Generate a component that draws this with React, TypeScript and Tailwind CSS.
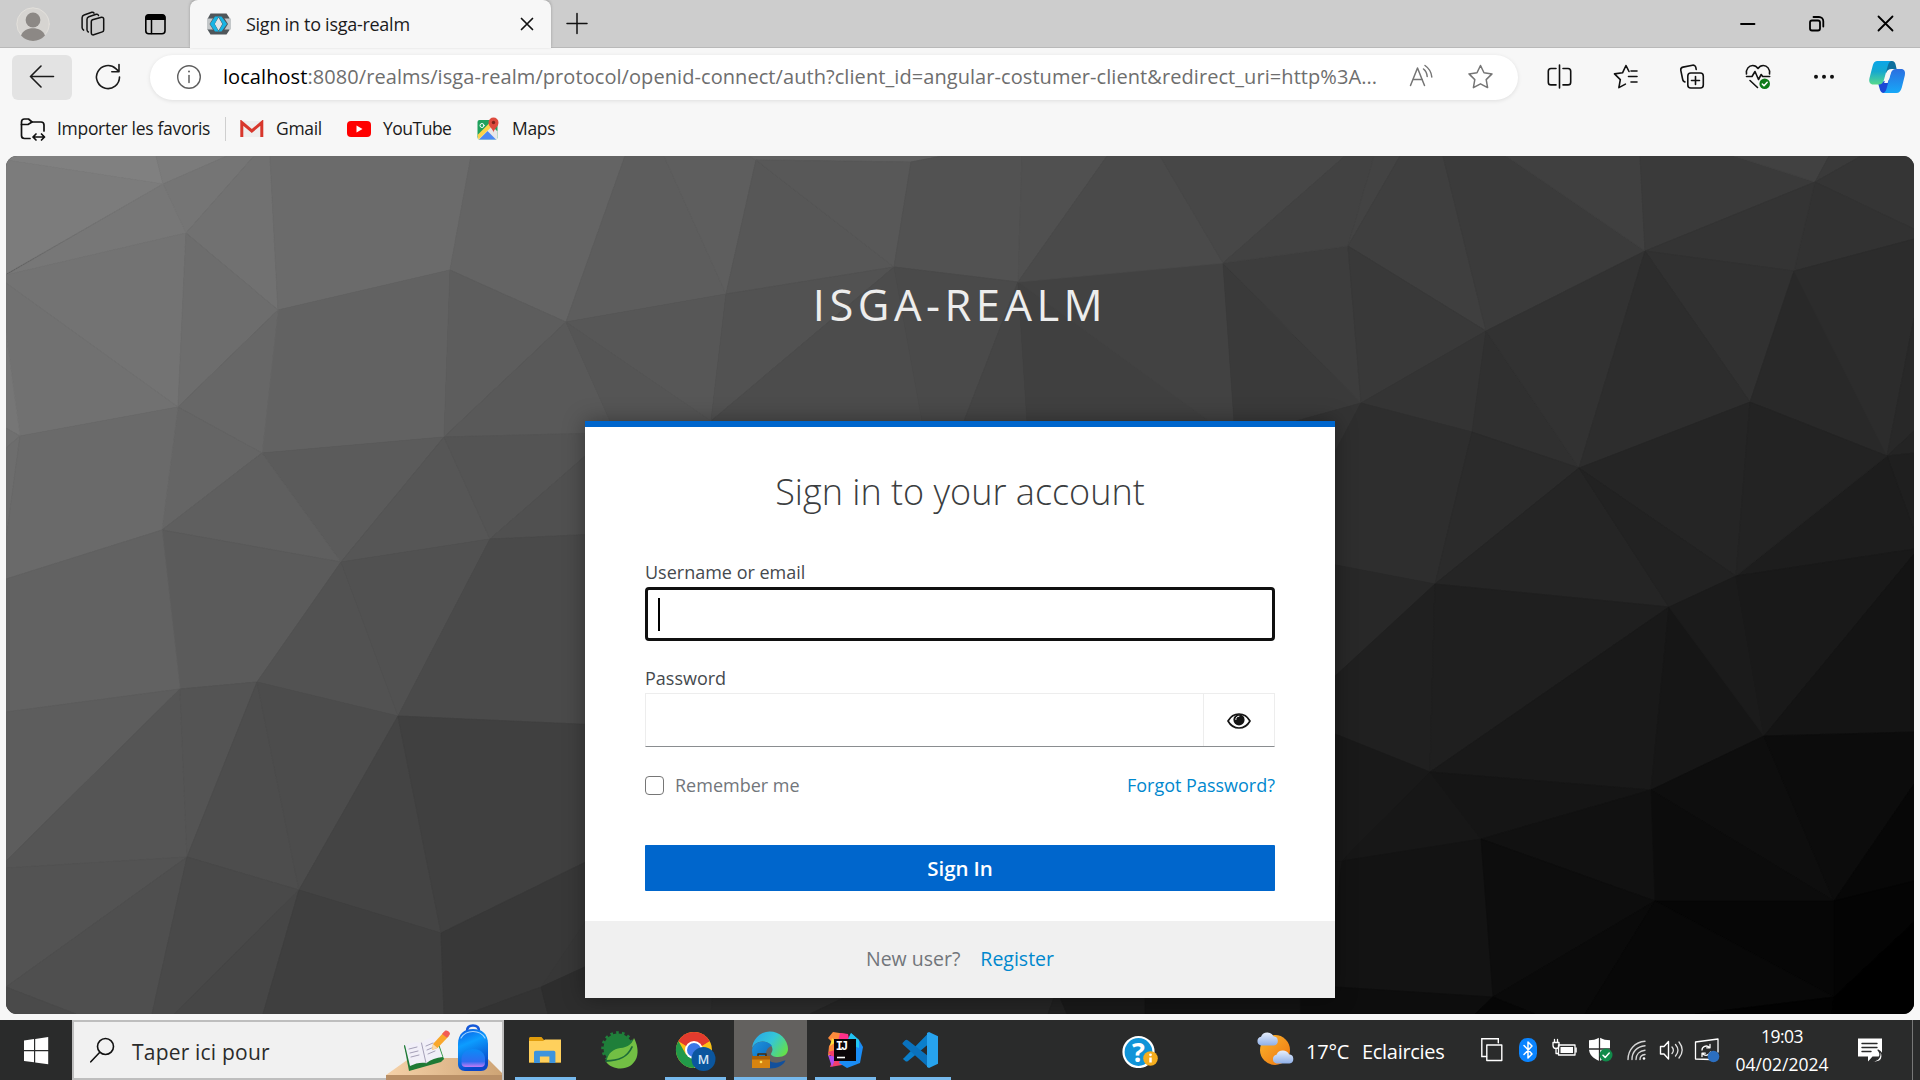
import type { ReactNode } from "react";

/* Draws an icon whose view box starts at (x, y) and is w by h pixels. */
function Icon({ x, y, w, h, className = "", children }: { x: number; y: number; w: number; h: number; className?: string; children: ReactNode }) {
  return (
    <svg width={w} height={h} viewBox={`${x} ${y} ${w} ${h}`} fill="none" strokeLinecap="round" strokeLinejoin="round" className={`block shrink-0 ${className}`}>
      {children}
    </svg>
  );
}

/* Low-poly facets: [points, fill]. */
const FACETS: [string, string][] = [
  ["6,156 156,156 163,184 6,160", "#808080"],
  ["156,156 227,156 163,184", "#7b7b7b"],
  ["163,184 227,156 254,156 186,233", "#757575"],
  ["186,233 254,156 270,156 278,310", "#717171"],
  ["6,160 163,184 6,274", "#7c7c7c"],
  ["163,184 186,233 6,275", "#777777"],
  ["6,275 186,233 178,407 6,283", "#737373"],
  ["6,283 178,407 20,436 6,333", "#717171"],
  ["186,233 278,310 178,407", "#6d6d6d"],
  ["6,333 20,436 6,428", "#767676"],
  ["6,428 20,436 6,448", "#707070"],
  ["20,436 6,448 6,540", "#6d6d6d"],
  ["270,156 471,156 450,270 278,310", "#6b6b6b"],
  ["471,156 625,156 566,322 450,270", "#646464"],
  ["278,310 450,270 444,437 262,453", "#626262"],
  ["278,310 262,453 178,407", "#676767"],
  ["450,270 566,322 444,437", "#5d5d5d"],
  ["178,407 262,453 162,530", "#656565"],
  ["20,436 178,407 162,530 6,579 6,540", "#6a6a6a"],
  ["262,453 444,437 341,562", "#5b5b5b"],
  ["262,453 162,530 341,562", "#5f5f5f"],
  ["566,322 444,437 610,433 610,421", "#595959"],
  ["444,437 341,562 490,539", "#565656"],
  ["444,437 490,539 600,443 600,433", "#545454"],
  ["490,539 600,443 600,534", "#505050"],
  ["162,530 341,562 257,682 180,689", "#5b5b5b"],
  ["162,530 180,689 6,712 6,579", "#626262"],
  ["341,562 398,716 257,682", "#525252"],
  ["341,562 490,539 398,716", "#515151"],
  ["490,539 600,534 600,725 398,716", "#4a4a4a"],
  ["6,712 180,689 6,861", "#5d5d5d"],
  ["180,689 187,857 6,868 6,861", "#555555"],
  ["180,689 257,682 187,857", "#545454"],
  ["257,682 187,857 299,890", "#4d4d4d"],
  ["257,682 398,716 299,890", "#4c4c4c"],
  ["398,716 299,890 441,933", "#444444"],
  ["398,716 441,933 600,855 600,725", "#404040"],
  ["6,868 187,857 6,987", "#535353"],
  ["187,857 6,987 76,1014 152,1014", "#4f4f4f"],
  ["6,987 6,1014 76,1014", "#4a4a4a"],
  ["187,857 152,1014 174,1014 299,890", "#494949"],
  ["299,890 174,1014 263,1014", "#464646"],
  ["299,890 263,1014 444,1014 441,933", "#3f3f3f"],
  ["441,933 444,1014 467,1014 541,987 600,900 600,855", "#383838"],
  ["541,987 600,900 600,960", "#373737"],
  ["541,987 467,1014 548,1014", "#333333"],
  ["541,987 548,1014 711,1014 713,998 600,960", "#2d2d2d"],
  ["625,156 664,156 726,294 566,322", "#5d5d5d"],
  ["664,156 749,156 756,160 726,294", "#5e5e5e"],
  ["749,156 942,156 911,162 756,160", "#606060"],
  ["756,160 726,294 894,267", "#575757"],
  ["756,160 911,162 894,267", "#585858"],
  ["566,322 726,294 711,421", "#575757"],
  ["566,322 711,421 610,421", "#555555"],
  ["726,294 894,267 711,421", "#525252"],
  ["911,162 942,156 1022,156 1018,282 894,267", "#525252"],
  ["894,267 922,421 711,421", "#4c4c4c"],
  ["894,267 1018,282 964,421 922,421", "#4a4a4a"],
  ["1018,282 964,421 1027,421", "#454545"],
  ["1018,282 1027,421 1209,421", "#404040"],
  ["1018,282 1223,263 1234,421 1209,421", "#424242"],
  ["1223,263 1234,421 1296,421 1361,403", "#3a3a3a"],
  ["1223,263 1348,246 1361,403", "#3d3d3d"],
  ["1022,156 1107,156 1018,282", "#505050"],
  ["1107,156 1160,156 1223,263 1018,282", "#4a4a4a"],
  ["1160,156 1345,156 1223,263", "#474747"],
  ["1345,156 1374,156 1348,246 1223,263", "#424242"],
  ["1374,156 1400,156 1348,246", "#434343"],
  ["1400,156 1443,156 1486,331 1348,246", "#3f3f3f"],
  ["1443,156 1506,156 1645,251 1486,331", "#3b3b3b"],
  ["1506,156 1640,156 1645,251", "#404040"],
  ["1640,156 1734,156 1815,182 1645,251", "#3a3a3a"],
  ["1734,156 1829,156 1815,182", "#414141"],
  ["1829,156 1861,156 1815,182", "#3a3a3a"],
  ["1861,156 1914,156 1914,229 1815,182", "#353535"],
  ["1815,182 1914,229 1914,239 1794,271", "#323232"],
  ["1645,251 1815,182 1794,271", "#343434"],
  ["1645,251 1794,271 1750,402", "#313131"],
  ["1794,271 1750,402 1887,456", "#292929"],
  ["1794,271 1914,239 1914,318 1887,456", "#2c2c2c"],
  ["1887,456 1914,318 1914,431", "#282828"],
  ["1887,456 1914,431 1914,453", "#242424"],
  ["1887,456 1914,453 1914,530", "#1f1f1f"],
  ["1887,456 1914,530 1914,549 1736,576", "#1d1d1d"],
  ["1348,246 1361,403 1486,331", "#393939"],
  ["1361,403 1486,331 1472,432", "#343434"],
  ["1486,331 1472,432 1579,468", "#303030"],
  ["1486,331 1645,251 1579,468", "#323232"],
  ["1645,251 1750,402 1579,468", "#2d2d2d"],
  ["1750,402 1579,468 1736,576", "#252525"],
  ["1750,402 1736,576 1887,456", "#232323"],
  ["1361,403 1296,421 1320,450 1336,450", "#333333"],
  ["1361,403 1472,432 1435,584 1320,562 1320,480", "#2e2e2e"],
  ["1472,432 1579,468 1435,584", "#2b2b2b"],
  ["1579,468 1435,584 1669,607", "#252525"],
  ["1579,468 1736,576 1669,607", "#222222"],
  ["1435,584 1320,562 1320,690", "#282828"],
  ["1435,584 1320,690 1320,728 1430,772", "#202020"],
  ["1435,584 1669,607 1430,772", "#1f1f1f"],
  ["1669,607 1430,772 1651,790", "#191919"],
  ["1669,607 1651,790 1764,736", "#161616"],
  ["1669,607 1736,576 1764,736", "#1b1b1b"],
  ["1736,576 1914,549 1914,554 1764,736", "#191919"],
  ["1764,736 1914,554 1914,732", "#141414"],
  ["1430,772 1320,728 1320,861 1342,861", "#191919"],
  ["1320,861 1342,861 1336,913 1336,987 1320,987", "#171717"],
  ["1430,772 1342,861 1481,839", "#171717"],
  ["1430,772 1481,839 1651,790", "#151515"],
  ["1481,839 1651,790 1655,901", "#111111"],
  ["1651,790 1764,736 1834,901", "#0e0e0e"],
  ["1651,790 1655,901 1834,901", "#0c0c0c"],
  ["1764,736 1914,732 1914,784 1834,901", "#0c0c0c"],
  ["1834,901 1914,784 1914,881", "#070707"],
  ["1834,901 1914,881 1914,922 1834,997", "#040404"],
  ["1655,901 1834,901 1834,997", "#060606"],
  ["1481,839 1342,861 1336,913 1336,987 1493,997", "#131313"],
  ["1481,839 1493,997 1655,901", "#0d0d0d"],
  ["1655,901 1493,997 1535,1014 1585,1014", "#0a0a0a"],
  ["1655,901 1585,1014 1695,1014 1834,997", "#080808"],
  ["1834,997 1695,1014 1832,1014", "#020202"],
  ["1834,997 1832,1014 1914,1014 1914,922", "#000000"],
  ["1336,987 1493,997 1475,1014 1300,1014 1300,985", "#0d0d0d"],
  ["1493,997 1475,1014 1535,1014", "#060606"],
  ["713,990 711,1014 810,1014 860,990", "#2b2b2b"],
  ["860,990 810,1014 1048,1014 1057,990", "#252525"],
  ["1057,990 1048,1014 1067,1014", "#202020"],
  ["1057,990 1067,1014 1145,1014 1145,990", "#191919"],
  ["1145,990 1145,1014 1300,1014 1300,990", "#131313"],
];

function PolyBackground() {
  return (
    <svg viewBox="6 156 1908 858" width="1908" height="858" className="absolute inset-0">
      <rect x="6" y="156" width="1908" height="858" fill="#2b2b2b" />
      {FACETS.map(([p, c], i) => (
        <polygon key={i} points={p} fill={c} stroke={c} strokeWidth="0.8" strokeLinejoin="round" />
      ))}
    </svg>
  );
}

function TabStrip() {
  return (
    <div className="flex h-12 shrink-0 bg-[#cdcdcd] shadow-[inset_0_-1px_0_#b9b9b9]">
      <div className="flex w-[190px] items-center pl-4">
        <Icon x={16} y={7} w={34} h={34}>
          <circle cx="33" cy="24" r="16.2" fill="#d6d4d1" stroke="#e6e3de" strokeWidth="0.8" />
          <circle cx="33" cy="20" r="7.4" fill="#8c8885" />
          <path d="M21 35.5c2-5 6.500-7.200 12-7.200s10 2.200 12 7.200a16 16 0 0 1-24 0z" fill="#8c8885" />
        </Icon>
        <Icon x={80} y={11} w={26} h={26} className="ml-[29px]">
          <g stroke="#111" strokeWidth="1.5">
            <path d="M93.500 19.800l9-2.600a1.800 1.800 0 0 1 2.200 1.800v11a2 2 0 0 1-1.400 1.900l-8.600 2.900a1.800 1.800 0 0 1-2.400-1.700V21.700a2 2 0 0 1 1.200-1.900z" />
            <path d="M99.500 15.500a1.800 1.800 0 0 0-2.300-1.200l-7.400 2.500a2.600 2.600 0 0 0-1.800 2.400v10.600c0 1 .5 1.700 1.300 2.200" />
            <path d="M95 13.200a1.800 1.800 0 0 0-2.200-.9l-7.700 2.700a3 3 0 0 0-2 2.800v9.700c0 1.200.6 2 1.500 2.600" />
          </g>
        </Icon>
        <Icon x={145} y={12} w={24} h={24} className="ml-[39px]">
          <rect x="146.800" y="14.800" width="19.200" height="19" rx="3" stroke="#000" strokeWidth="1.600" />
          <path d="M146.500 20v-2a3.500 3.500 0 0 1 3.500-3.500h13a3.500 3.500 0 0 1 3.500 3.500v2z" fill="#000" />
          <path d="M152.500 20v13.500" stroke="#000" strokeWidth="1.500" />
        </Icon>
      </div>
      <div className="flex w-[361px] items-center rounded-t-lg bg-[#f7f7f7] shadow-[0_-1px_3px_rgba(0,0,0,0.25)]">
        <Icon x={206} y={12} w={26} h={24} className="ml-4">
          <path d="M210.500 13.500h16l3 4.500v12l-3 4.500h-16l-3-5V19z" fill="#50565a" />
          <path d="M207 18.500h24v11h-24z" fill="#c3c7c9" />
          <path d="M214.500 16h8.500l5 8-5 8h-8.500l-5-8z" fill="#50565a" />
          <path d="M218.500 17.500l3.800 6.500-3.800 6.500-3.800-6.500z" fill="#dfe5e8" />
          <path d="M215 16.500l-5 7.500 5 7.500h3.700l-4.200-7.500 4.200-7.500zM221.500 16.500l5.500 7.500-5.500 7.500h-3l4.300-7.500-4.300-7.500z" fill="#18b4e4" />
        </Icon>
        <span className="ml-3.5 w-[273px] whitespace-nowrap text-[18px] tracking-[-0.27px] text-[#1b1b1b]">Sign in to isga-realm</span>
        <Icon x={519} y={17} w={16} h={16}>
          <path d="M521.500 19.500l11 11m0-11l-11 11" stroke="#111" strokeWidth="1.700" />
        </Icon>
      </div>
      <div className="flex flex-1 items-center">
        <Icon x={565} y={12} w={24} h={24} className="ml-3.5">
          <path d="M567 23.500h20M577 13.500v20" stroke="#111" strokeWidth="1.500" />
        </Icon>
        <Icon x={1739} y={13} w={18} h={20} className="ml-auto">
          <path d="M1741 23h13.500" stroke="#000" strokeWidth="1.800" />
        </Icon>
        <Icon x={1807} y={14} w={20} h={20} className="ml-[50px]">
          <rect x="1810" y="20.500" width="10" height="10" rx="2" stroke="#000" strokeWidth="1.800" />
          <path d="M1813.500 17h5.500a4.300 4.300 0 0 1 4.300 4.300v5.200" stroke="#000" strokeWidth="1.800" />
        </Icon>
        <Icon x={1876} y={14} w={20} h={20} className="mr-6 ml-[49px]">
          <path d="M1878.500 16.500l14 14m0-14l-14 14" stroke="#000" strokeWidth="1.800" />
        </Icon>
      </div>
    </div>
  );
}

function Toolbar() {
  return (
    <div className="flex h-[59px] shrink-0 items-center pb-[3px] pt-0.5">
      <div className="ml-3 flex h-[45px] w-[60px] items-center justify-center rounded-md bg-[#e3e3e3]">
        <Icon x={29} y={65} w={26} h={24}>
          <path d="M53.500 76.500H30.500M41 66L30.500 76.500 41 87" stroke="#1b1b1b" strokeWidth="1.600" />
        </Icon>
      </div>
      <Icon x={94} y={63} w={28} h={28} className="ml-[22px]">
        <path d="M119.500 77a11.500 11.500 0 1 1-3.700-8.400l3 2.800M119 64.500v7.200h-7.200" stroke="#1b1b1b" strokeWidth="1.600" />
      </Icon>
      <div className="ml-7 flex h-[45px] w-[1368px] items-center rounded-full bg-white shadow-[0_1px_4px_rgba(0,0,0,0.1)]">
        <Icon x={176} y={64} w={26} h={26} className="ml-[26px]">
          <circle cx="189" cy="77" r="11.300" stroke="#5f5f5f" strokeWidth="1.400" />
          <path d="M189 75.500v7" stroke="#5f5f5f" strokeWidth="1.500" />
          <circle cx="189" cy="71.500" r="1" fill="#5f5f5f" />
        </Icon>
        <span className="ml-[21px] w-[1185px] whitespace-nowrap text-[20px] tracking-[0.07px] text-[#6e6e6e]">
          <span className="text-black">localhost</span>:8080/realms/isga-realm/protocol/openid-connect/auth?client_id=angular-costumer-client&amp;redirect_uri=http%3A...
        </span>
        <Icon x={1408} y={63} w={28} h={28}>
          <g stroke="#757575" strokeWidth="1.500">
            <path d="M1410.500 85.500l7-17.500 7 17.500M1412.800 79.500h9.500" />
            <path d="M1423.500 69c2.200 1.800 3.500 4.300 3.700 7.500M1425 65.500c4 2.700 6.300 6.500 6.800 11.500" />
          </g>
        </Icon>
        <Icon x={1467} y={63} w={28} h={28} className="ml-[31px]">
          <path d="M1480.500 65.500l3.500 7.300 8 1.100-5.800 5.700 1.400 8-7.100-3.800-7.100 3.800 1.400-8-5.800-5.700 8-1.100z" stroke="#757575" strokeWidth="1.500" />
        </Icon>
      </div>
      <Icon x={1546} y={63} w={28} h={28} className="ml-7">
        <g stroke="#111" strokeWidth="1.600">
          <path d="M1559.500 65v23M1556 68.500h-5a2.700 2.700 0 0 0-2.700 2.700v11a2.700 2.700 0 0 0 2.700 2.700h5M1563 68.500h5a2.700 2.700 0 0 1 2.700 2.700v11a2.700 2.700 0 0 1-2.700 2.700h-5" />
        </g>
      </Icon>
      <Icon x={1612} y={63} w={28} h={28} className="ml-[38px]">
        <path d="M1637 76.500h-8.500M1637 71h-6M1637 82h-6M1629 71.500l-3-6-3.500 7.300-8 1.100 5.800 5.700-1.400 8 6.500-3.500" stroke="#111" strokeWidth="1.600" />
      </Icon>
      <Icon x={1678} y={63} w={28} h={28} className="ml-[38px]">
        <g stroke="#111" strokeWidth="1.600">
          <rect x="1687.800" y="73" width="15.500" height="15" rx="3" />
          <path d="M1695.500 76.500v8M1691.500 80.500h8" />
          <path d="M1685 82l-1-.5a3 3 0 0 1-1.300-2l-1.900-9.200a2.800 2.800 0 0 1 2.200-3.200l9.500-1.900a2.800 2.800 0 0 1 3.300 2.200l.4 2" />
        </g>
      </Icon>
      <Icon x={1744} y={63} w={30} h={30} className="ml-[38px]">
        <g stroke="#111" strokeWidth="1.600">
          <path d="M1746.500 75c-.8-5 2.500-8.500 6.200-8.500 2.300 0 4 1 5.300 3 1.300-2 3-3 5.300-3 3.700 0 7 3.500 6.200 8.500" />
          <path d="M1746.500 77.500h5.500l3-5 3.500 8 2.700-5 1.500 2h7" />
          <path d="M1750 81.500l7.500 7" />
        </g>
        <circle cx="1764.700" cy="84.800" r="5.300" fill="#0f7b18" />
        <path d="M1762.300 85l1.700 1.700 3.200-3.500" stroke="#fff" strokeWidth="1.500" />
      </Icon>
      <Icon x={1812} y={72} w={24} h={10} className="ml-[38px]">
        <g fill="#111">
          <circle cx="1816" cy="76.700" r="2" />
          <circle cx="1824" cy="76.700" r="2" />
          <circle cx="1832" cy="76.700" r="2" />
        </g>
      </Icon>
      <Icon x={1868} y={59} w={38} h={36} className="ml-8">
        <defs>
          <linearGradient id="cpA" x1="0" y1="0" x2="0" y2="1">
            <stop offset="0" stopColor="#0aa5e8" />
            <stop offset="0.450" stopColor="#16a9cf" />
            <stop offset="1" stopColor="#57d98c" />
          </linearGradient>
          <linearGradient id="cpB" x1="0" y1="0" x2="0" y2="1">
            <stop offset="0" stopColor="#2b6fe0" />
            <stop offset="1" stopColor="#17a8f8" />
          </linearGradient>
        </defs>
        <path d="M1884 61h8c2 0 3 1.500 3.600 3.500l1 4.500h-5c-3 0-4.500 1.500-5.500 4z" fill="#0d6f9e" />
        <path d="M1878 83c1.500 4 1.800 9.500 5 10h4l4-14z" fill="#1b49d6" />
        <path d="M1877 61h14.500c-2 .6-2.800 2-3.600 4.500l-4 14.500c-.8 3-2.500 4.500-5.400 4.500h-5c-3.500 0-5-2.500-4-6.500l3-11.500c.8-3.300 2-5.500 4.500-5.500z" fill="url(#cpA)" />
        <path d="M1883 93c2-.6 2.900-2 3.600-4.500l4-14.500c.9-3.200 2.600-5 5.400-5h5c3.300 0 4.700 2.600 3.800 6.500l-3 12c-.9 3.500-2.500 5.500-5.500 5.500z" fill="url(#cpB)" />
        <path d="M1888.500 70.500h2.800l-3.600 12.500h-3.600z" fill="#f7f7f7" />
      </Icon>
    </div>
  );
}

function Bookmarks() {
  return (
    <div className="flex h-[49px] shrink-0 items-center whitespace-nowrap pb-1.5 text-[17.5px] tracking-[-0.3px] text-[#1b1b1b]">
      <Icon x={19} y={115} w={28} h={26} className="ml-[19px]">
        <g stroke="#111" strokeWidth="1.700">
          <path d="M30 137.500h-5.500a3 3 0 0 1-3-3V121a3 3 0 0 1 3-3h4l3.500 3h9a3 3 0 0 1 3 3v6" />
          <path d="M21.500 123.500h6.500l4-2.500M33 136h11.500M36 133l-3 3 3 3M41.500 133l3 3-3 3" />
        </g>
      </Icon>
      <span className="ml-2.5 w-[168px]">Importer les favoris</span>
      <div className="h-6 w-px bg-[#cfcfcf]" />
      <Icon x={240} y={120} w={24} h={18} className="ml-3.5">
        <path d="M241 121h22v16h-22z" fill="#eee" />
        <path d="M241.800 137v-14.500l10 8.500 10-8.500V137" stroke="#d8372c" strokeWidth="3" strokeLinejoin="miter" strokeLinecap="butt" />
      </Icon>
      <span className="ml-3 w-[71px]">Gmail</span>
      <Icon x={347} y={120} w={24} h={18}>
        <rect x="347" y="121" width="24" height="16" rx="4" fill="#f00" />
        <path d="M356.500 125.500v7l6-3.500z" fill="#fff" />
      </Icon>
      <span className="ml-3 w-[94px] tracking-[-0.5px]">YouTube</span>
      <Icon x={478} y={116} w={23} h={24}>
        <rect x="478.500" y="119" width="20" height="19.500" rx="2" fill="#1fa15d" />
        <path d="M478.500 136.500l13-13 7 7v6a2 2 0 0 1-2 2h-16a2 2 0 0 1-2-2z" fill="#e8e8e8" />
        <path d="M480 138.500l8.500-8.500 8.500 8.500z" fill="#4a89f3" />
        <path d="M478.500 134l14-14 3 3-16 15.500z" fill="#fcd34a" />
        <path d="M494.500 131.500c-.5-4-5-5.500-5-10a5 5 0 0 1 10 0c0 4.500-4.500 6-5 10z" fill="#dd4b3e" />
        <circle cx="494.500" cy="121.500" r="1.700" fill="#7e231b" />
        <circle cx="483" cy="124.500" r="2" stroke="#fff" strokeWidth="1" />
      </Icon>
      <span className="ml-3">Maps</span>
    </div>
  );
}

function LoginCard() {
  return (
    <div className="mx-auto flex h-[577px] w-[750px] flex-col border-t-[6px] border-[#0066cc] bg-white shadow-[0_0_20px_rgba(3,3,3,0.35)]">
      <div className="flex h-[494px] flex-col px-[60px] text-[18px] leading-[27px] text-[#45494d]">
        <h1 className="mt-[41px] h-[50px] text-center text-[36px] font-light leading-[48px] text-[#3a3d40]">Sign in to your account</h1>
        <label className="mb-px mt-[41px]">Username or email</label>
        <div className="flex h-[54px] items-center rounded border-[3px] border-[#101010] bg-white px-2.5">
          <div className="h-[33px] w-[2px] bg-black" />
        </div>
        <label className="mt-[24px] h-[28px]">Password</label>
        <div className="flex h-[54px] border border-[#ededed] border-b-[#8a8d90]">
          <div className="w-[558px] border-r border-[#ededed]" />
          <div className="flex flex-1 items-center justify-center pt-0.5">
            <Icon x={1227} y={711} w={24} h={20}>
              <path d="M1228 721c2.500-4.500 6.500-7 11-7s8.500 2.500 11 7c-2.500 4.500-6.500 7-11 7s-8.500-2.500-11-7z" stroke="#151515" strokeWidth="1.700" />
              <circle cx="1239" cy="719.800" r="5.600" fill="#151515" />
              <path d="M1235.800 719.500c0-2 1.300-3.300 3.200-3.300" stroke="#fff" strokeWidth="1" />
            </Icon>
          </div>
        </div>
        <div className="mt-[25px] flex h-[27px] items-center">
          <div className="mb-px size-[19px] rounded border-[1.5px] border-[#767676] bg-white" />
          <span className="ml-[11px] text-[#72767b]">Remember me</span>
          <span className="ml-auto text-[#0088ce]">Forgot Password?</span>
        </div>
        <div className="mt-[46px] flex h-[46px] items-center justify-center rounded-[1px] bg-[#0066cc] text-[20.5px] font-semibold tracking-[-0.1px] text-white">Sign In</div>
      </div>
      <div className="flex flex-1 items-center justify-center gap-5 bg-[#f0f0f0] pb-0.5 text-[19.5px]">
        <span className="text-[#72767b]">New user?</span>
        <span className="text-[#0088ce]">Register</span>
      </div>
    </div>
  );
}

function TaskApp({ children, className }: { children: ReactNode; className: string }) {
  return <div className={`flex h-[60px] shrink-0 flex-col items-center justify-between ${className}`}>{children}</div>;
}

function Taskbar() {
  return (
    <div className="flex h-[60px] shrink-0 items-center bg-[#2a2b2b] text-white">
      <Icon x={0} y={1020} w={72} h={60}>
        <path d="M24 1040.500l10-1.400v11h-10zM35.200 1039l13-1.900v13h-13zM24 1051.300h10v11l-10-1.400zM35.200 1051.300h13v13l-13-1.900z" fill="#fff" />
      </Icon>
      <div className="flex h-[60px] w-[432px] items-center border-2 border-[#bebebe] bg-[#f1f1f1]">
        <Icon x={88} y={1036} w={28} h={28} className="ml-3.5">
          <circle cx="105.500" cy="1046.500" r="8" stroke="#111" strokeWidth="1.600" />
          <path d="M99.800 1052.300l-9 9.500" stroke="#111" strokeWidth="1.600" />
        </Icon>
        <span className="ml-4 mt-1.5 w-[254px] whitespace-nowrap text-[21px] tracking-[0.2px] text-[#2b2b2b]">Taper ici pour</span>
        <Icon x={386} y={1022} w={116} h={58} className="-mb-0.5">
          <defs>
            <linearGradient id="desk" x1="0" y1="0" x2="1" y2="0">
              <stop offset="0" stopColor="#f6d2a9" />
              <stop offset="1" stopColor="#cda374" />
            </linearGradient>
            <linearGradient id="bag" x1="0" y1="0" x2="0.300" y2="1">
              <stop offset="0" stopColor="#0a55e0" />
              <stop offset="0.400" stopColor="#0c9dff" />
              <stop offset="1" stopColor="#0a47c9" />
            </linearGradient>
            <linearGradient id="pocket" x1="0" y1="0" x2="0" y2="1">
              <stop offset="0" stopColor="#0a8cf7" />
              <stop offset="0.700" stopColor="#2f6cf0" />
              <stop offset="1" stopColor="#c77bf5" />
            </linearGradient>
          </defs>
          <path d="M386 1075l24-17h77l17 17z" fill="url(#desk)" />
          <path d="M386 1075h118v6H386z" fill="#b98f66" />
          <path d="M404 1046l35-2 5 15-33 11z" fill="#2f9443" />
          <path d="M404 1045l5 26 32-9 3-3-5-5z" fill="#1f7a35" />
          <path d="M405 1045c6-3 12-3.500 16.500-2 3.500-3.500 8-5.500 14-6l7 20c-6 .5-12 3-16 6-5-1-11 0-16.500 3z" fill="#f1eff8" />
          <path d="M421.500 1043l4.500 20M409 1049l8-2M410 1053l8-2M411 1057l8-2M426 1046l7-3M427 1050l7-3M428 1054l7-3" stroke="#a5a0b8" strokeWidth="1" />
          <path d="M432 1050l1-6 11-12 5 4-11.500 12z" fill="#f9a72b" />
          <path d="M432 1050l1-6 4.500 4z" fill="#f8d9ab" />
          <path d="M442 1034l3-3.200c1-1 4-.2 4.800 2.200.4 1.300-.3 2-1 2.800l-1.800 2z" fill="#f25c54" />
          <path d="M467 1031c0-4 2.500-5.500 6-5.500s6 1.500 6 5.500" stroke="#1458d8" strokeWidth="2.500" />
          <path d="M458 1044c0-10 6-15 15-15s15 5 15 15v20c0 4-2.500 7-7 7h-16c-4.500 0-7-3-7-7z" fill="url(#bag)" />
          <path d="M461 1038c3-5 7-6.500 12-6.500s9 1.500 12 6.500" stroke="#9fd2ff" strokeWidth="1.200" />
          <path d="M461.500 1059c0-6 4.500-10 11.500-10s12 4 12 10v4c0 2.500-1.500 4-4 4h-15.500c-2.500 0-4-1.500-4-4z" fill="url(#pocket)" />
        </Icon>
      </div>

      <TaskApp className="ml-[11px] w-[61px]">
        <Icon x={528} y={1034} w={34} h={32} className="mr-px mt-3.5">
          <path d="M529 1038.500c0-.8.700-1.500 1.500-1.500h11l2.500 3H561v22.500h-32z" fill="#e09c0c" />
          <path d="M529 1041h14l2-1.500h16v23h-32z" fill="#ffd05c" />
          <path d="M534 1063v-10.500c0-1 .8-1.700 1.700-1.700h18c1 0 1.700.7 1.700 1.700V1063h-6v-6.500h-9.500v6.500z" fill="#3d94dd" />
        </Icon>
        <div className="h-[3px] w-full bg-[#76b9ed]" />
      </TaskApp>
      <TaskApp className="ml-6 w-[40px]">
        <Icon x={600} y={1030} w={40} h={40} className="mt-2.5">
          <circle cx="618" cy="1048" r="14.500" fill="#1f7f3a" />
          <circle cx="618" cy="1048" r="15" stroke="#1f7f3a" strokeWidth="3.500" strokeDasharray="2.600 3.100" strokeLinecap="butt" />
          <path d="M634 1038c3 6 5 13 2.500 20-3 7-9 10.500-16 10.500-6 0-11-2.500-14-6 1-10 7-13.500 14-14.500 7-.8 11-3 13.500-10z" fill="#72bf44" />
          <path d="M606 1061c12 0 21-3 26-14" stroke="#1d6b38" strokeWidth="1.800" />
        </Icon>
      </TaskApp>
      <TaskApp className="ml-[25px] w-[61px]">
        <Icon x={676} y={1030} w={42} h={44} className="mt-2.5">
          <circle cx="695" cy="1050" r="18" fill="#fbc116" />
          <path d="M695 1050l-15.600-9a18 18 0 0 1 31.200 0z" fill="#e33b2e" />
          <path d="M679.400 1041a18 18 0 0 0 15.600 27l8-13.500-16 0z" fill="#229a49" />
          <path d="M679.400 1041h31.200L695 1051z" fill="#e33b2e" />
          <circle cx="695" cy="1050" r="9" fill="#fff" />
          <circle cx="695" cy="1050" r="7" fill="#3b78e7" />
          <circle cx="704.500" cy="1059" r="12" fill="#0b569e" />
          <text x="704.500" y="1063.700" fill="#d7e6f5" fontSize="12.500" fontWeight="600" fontFamily="Open Sans, sans-serif" textAnchor="middle">M</text>
        </Icon>
        <div className="h-[3px] w-full bg-[#76b9ed]" />
      </TaskApp>
      <TaskApp className="ml-2 w-[73px] bg-[#63615f]">
        <Icon x={750} y={1030} w={40} h={40} className="mr-0.5 mt-2.5">
          <defs>
            <linearGradient id="edA" x1="0" y1="0.200" x2="1" y2="0.700">
              <stop offset="0" stopColor="#28a8e8" />
              <stop offset="0.500" stopColor="#34c6d8" />
              <stop offset="1" stopColor="#64e04a" />
            </linearGradient>
            <linearGradient id="edB" x1="0" y1="0" x2="1" y2="1">
              <stop offset="0" stopColor="#1c95e0" />
              <stop offset="1" stopColor="#0d5cb0" />
            </linearGradient>
          </defs>
          <path d="M752 1050a18 18 0 0 1 36-1c0 5-4 8-10 8-4.500 0-7-1.500-7-3 0-1 1.500-2 1.500-4.500 0-4-4-8-10-8-5 0-9 3-10.500 7z" fill="url(#edA)" />
          <path d="M752 1050c1-5 5.500-8.500 10.500-8.500 4 0 7.500 1.500 9.500 4.500-3 .5-6 3-6 8 0 7 5 11 9 12.500-1.500 1-3 1.500-5 1.500a18 18 0 0 1-18-18z" fill="url(#edB)" />
          <path d="M766 1054c0 7 7 9.500 12 8.500 4-.8 6-2.500 7.500-2-2 4.500-8 8-15.500 8-4-3-6-9-4-14.500z" fill="#12509c" />
          <path d="M758 1056v-2h8v2" stroke="#4a2c08" strokeWidth="1.500" />
          <rect x="752" y="1056" width="18" height="12" fill="#d88410" />
          <path d="M752 1056h18v3.500h-18z" fill="#a75f08" />
          <circle cx="761" cy="1062" r="1.300" fill="#ffe15a" />
        </Icon>
        <div className="h-[3px] w-full bg-[#76b9ed]" />
      </TaskApp>
      <TaskApp className="ml-2 w-[61px]">
        <Icon x={826} y={1030} w={40} h={40} className="mt-2.5">
          <path d="M833 1032l13 2-4 16-14 6 1-10 3-4-4-4z" fill="#fc8a3c" />
          <path d="M840 1033l8 1 2 10-14 6z" fill="#fe2f8a" />
          <path d="M828 1052l14-4 6 16-18 3 3-9z" fill="#f43f6b" />
          <path d="M828 1055l8 2-4 10z" fill="#b04df0" />
          <path d="M851 1033l8 7 4 7-3 16-13 5-8-5 8-20z" fill="#1a8cf5" />
          <path d="M851 1033l8 7v8l-13-5z" fill="#22c3f0" />
          <path d="M832 1038l4 4-6 4z" fill="#fddc3a" />
          <rect x="834" y="1039" width="22" height="22" fill="#0a0508" />
          <text x="835.800" y="1050.300" fill="#fff" fontSize="12" fontWeight="700" fontFamily="Liberation Mono, monospace" textLength="12.500">IJ</text>
          <path d="M837 1057.500h8" stroke="#fff" strokeWidth="1.600" strokeLinecap="butt" />
        </Icon>
        <div className="h-[3px] w-full bg-[#76b9ed]" />
      </TaskApp>
      <TaskApp className="ml-[14px] w-[61px]">
        <Icon x={900} y={1030} w={40} h={40} className="mr-0.5 mt-2.5">
          <path d="M903.500 1058.500l24.500-25v11l-20 16.500c-1 .8-2 .7-2.700 0l-1.800-1.500c-.7-.6-.7-1 0-1z" fill="#0a7fcb" />
          <path d="M903 1042.500l2.200-2.200c.8-.8 1.700-.7 2.600 0L928 1056v11l-25-22.500c-.7-.7-.7-1.300 0-2z" fill="#0a72bd" />
          <path d="M927 1033l2-1 9 4.300v27.500l-9 4.300-2-1.200z" fill="#27a3ee" />
        </Icon>
        <div className="h-[3px] w-full bg-[#76b9ed]" />
      </TaskApp>

      <Icon x={1119} y={1034} w={38} h={34} className="ml-[169px] mt-0.5">
        <circle cx="1137.500" cy="1052" r="15" fill="#1094d8" stroke="#fff" strokeWidth="2.200" />
        <text x="1137.500" y="1061.500" fill="#fff" fontSize="27" fontWeight="700" fontFamily="Open Sans, sans-serif" textAnchor="middle">?</text>
        <circle cx="1149.500" cy="1058.500" r="7.300" fill="#f5ad1e" />
        <path d="M1149.500 1057.500v5" stroke="#fff" strokeWidth="2.500" strokeLinecap="butt" />
        <circle cx="1149.500" cy="1054.800" r="1.400" fill="#fff" />
      </Icon>
      <Icon x={1257} y={1031} w={40} h={38} className="ml-[98px]">
        <defs>
          <linearGradient id="sun" x1="0" y1="0" x2="1" y2="1">
            <stop offset="0" stopColor="#fbb62c" />
            <stop offset="1" stopColor="#ee7410" />
          </linearGradient>
          <linearGradient id="cloud" x1="0" y1="0" x2="0" y2="1">
            <stop offset="0" stopColor="#e6eefc" />
            <stop offset="1" stopColor="#8fb0e8" />
          </linearGradient>
        </defs>
        <circle cx="1276" cy="1050" r="15" fill="url(#sun)" />
        <path d="M1262 1045.500a4.500 4.500 0 0 1 0-8.800 7 7 0 0 1 12.500-.5 4.700 4.700 0 0 1 .5 9.300z" fill="url(#cloud)" />
        <path d="M1277.500 1063.500a4.500 4.500 0 0 1 0-8.800 7 7 0 0 1 12.500-.5 4.700 4.700 0 0 1 .5 9.300z" fill="url(#cloud)" />
      </Icon>
      <span className="ml-2.5 mt-1 w-[56px] whitespace-nowrap text-[20px] tracking-[-0.2px]">17°C</span>
      <span className="mt-1 w-[118px] whitespace-nowrap text-[20px] tracking-[-0.3px]">Eclaircies</span>

      <Icon x={1480} y={1037} w={24} h={26}>
        <path d="M1486.500 1056.500h-4.700v-17.700h16.500v4" stroke="#fff" strokeWidth="1.400" strokeLinejoin="miter" />
        <rect x="1486.800" y="1045" width="15" height="15.500" stroke="#fff" strokeWidth="1.400" />
      </Icon>
      <Icon x={1518} y={1037} w={20} h={26} className="ml-3.5">
        <rect x="1519" y="1038" width="18" height="24" rx="8.500" fill="#0a84ff" />
        <path d="M1524 1045.500l8 8.500-4 4v-16l4 4-8 8.500" stroke="#fff" strokeWidth="1.500" />
      </Icon>
      <Icon x={1551} y={1039} w={26} h={20} className="ml-[13px] -mt-1">
        <rect x="1558.500" y="1046" width="16.500" height="10" stroke="#fff" strokeWidth="1.300" />
        <path d="M1560.500 1048h12.500v6h-12.500z" fill="#fff" />
        <path d="M1576 1049v4" stroke="#fff" strokeWidth="1.500" />
        <path d="M1553 1043.500h6v3a3 3 0 0 1-6 0zM1554.500 1043v-2.500M1557.500 1043v-2.500M1556 1049.500v5h2" stroke="#fff" strokeWidth="1.300" />
      </Icon>
      <Icon x={1586} y={1037} w={28} h={28} className="ml-[9px]">
        <path d="M1599.500 1038.500c3.500 2.200 7 2.700 10.500 2.700v8.300c0 6-4 10-10.500 12.500-6.500-2.500-10.500-6.500-10.500-12.500v-8.300c3.500 0 7-.5 10.500-2.700z" fill="#fff" />
        <path d="M1599.500 1038.500v23M1589 1050h21" stroke="#2a2b2b" strokeWidth="1.300" />
        <circle cx="1606" cy="1056" r="6.500" fill="#118a4a" />
        <path d="M1603 1056.200l2.200 2.200 4-4.400" stroke="#fff" strokeWidth="1.500" />
      </Icon>
      <Icon x={1626} y={1039} w={22} h={24} className="ml-[11px]">
        <g stroke="#d5d5d5" strokeWidth="1.400">
          <path d="M1629 1060.500c0-10 7-17.500 17-18.300M1633 1060.500c0-7.500 5-13 13-13.800M1637 1060.500c0-5 3.500-8.700 9-9.300M1641 1060.500c0-2.700 2-4.700 5-5" />
        </g>
        <circle cx="1645" cy="1059.500" r="1.300" fill="#fff" />
      </Icon>
      <Icon x={1660} y={1039} w={26} h={22} className="ml-3">
        <path d="M1661.500 1046.500h3.500l4.500-5v17.500l-4.500-5h-3.500z" stroke="#fff" strokeWidth="1.400" />
        <path d="M1673 1047c1.700 2 1.700 4.500 0 6.500M1676.500 1044.500c3 3.500 3 8 0 11.500M1680 1042c4 5 4 11 0 16" stroke="#e0e0e0" strokeWidth="1.300" />
      </Icon>
      <Icon x={1695} y={1037} w={26} h={26} className="ml-[9px]">
        <path d="M1712 1059.500l-15.500-.5v-17l22.500-3v13" stroke="#fff" strokeWidth="1.300" />
        <path d="M1703 1050c0-3.500 4.500-5.500 7.500-2.500M1711 1044.500v3.300h-3.300M1711.500 1052c-1 3.500-5.500 4.500-8 1.500M1703 1056.500v-3.300h3.300" stroke="#fff" strokeWidth="1.300" />
        <circle cx="1714.500" cy="1056.500" r="5.800" fill="#2c6fc0" />
      </Icon>
      <div className="ml-[12px] flex w-[100px] flex-col items-center gap-1 whitespace-nowrap text-[17.5px] leading-6">
        <span className="tracking-[-0.5px]">19:03</span>
        <span>04/02/2024</span>
      </div>
      <Icon x={1856} y={1036} w={28} h={28} className="ml-6">
        <path d="M1858 1038.500h24v18h-9.500l-4.500 5v-5h-10z" fill="#fff" />
        <path d="M1862 1043.500h15M1862 1047.500h15M1862 1051.500h9" stroke="#2a2b2b" strokeWidth="1.400" />
        <path d="M1878 1050c4 4 1.500 11-5.500 10.500 2 2.500 9 2 9.500-4 .2-3-1.500-5.500-4-6.500z" fill="#fff" stroke="#2a2b2b" strokeWidth="1.200" />
      </Icon>
      <div className="ml-[28px] h-[60px] w-px bg-[#777]" />
    </div>
  );
}

export default function App() {
  return (
    <div className="flex h-[1080px] w-[1920px] flex-col overflow-hidden bg-[#f7f7f7] font-['Open_Sans',sans-serif]">
      <TabStrip />
      <Toolbar />
      <Bookmarks />
      <main className="relative mx-1.5 mb-1.5 flex h-[858px] shrink-0 flex-col overflow-hidden rounded-[11px]">
        <PolyBackground />
        <div className="relative flex flex-1 flex-col">
          <div className="flex h-[265px] justify-center pt-[119px] text-[43.5px] uppercase leading-[60px] tracking-[4.5px] text-[#ededed]">
            <span>ISGA-REALM</span>
          </div>
          <LoginCard />
        </div>
      </main>
      <Taskbar />
    </div>
  );
}
